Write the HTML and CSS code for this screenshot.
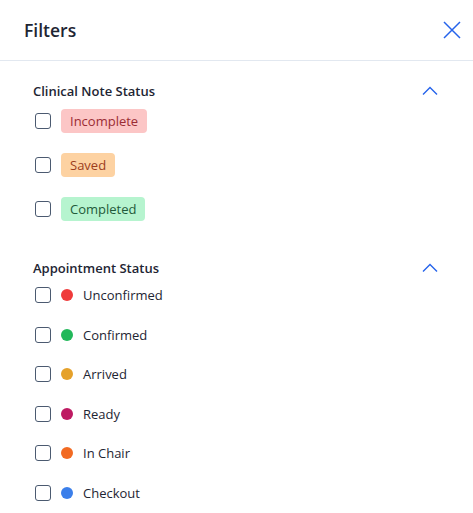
FILE: index.html
```html
<!DOCTYPE html>
<html lang="en">
  <head>
    <meta charset="UTF-8" />
    <meta name="viewport" content="width=device-width, initial-scale=1.0" />
    <title>Filters</title>
    <link rel="stylesheet" href="styles.css">
  </head>
  <body>
    <div class="panel">
      <div class="header">
        <h2 class="title">Filters</h2>
        <span class="close">
          <svg width="18" height="18" viewBox="0 0 18 18"><path d="M1 1L17 17M17 1L1 17" stroke="#2563eb" stroke-width="1.5" fill="none"/></svg>
        </span>
      </div>

      <div class="section">
        <div class="section-head">
          <span class="section-title">Clinical Note Status</span>
          <svg class="chevron" width="16" height="10" viewBox="0 0 16 10"><path d="M1 8.5L8 1.5L15 8.5" stroke="#2563eb" stroke-width="1.4" fill="none"/></svg>
        </div>
        <div class="list badges">
          <label class="row"><span class="box"></span><span class="badge incomplete">Incomplete</span></label>
          <label class="row"><span class="box"></span><span class="badge saved">Saved</span></label>
          <label class="row"><span class="box"></span><span class="badge completed">Completed</span></label>
        </div>
      </div>

      <div class="section second">
        <div class="section-head">
          <span class="section-title">Appointment Status</span>
          <svg class="chevron" width="16" height="10" viewBox="0 0 16 10"><path d="M1 8.5L8 1.5L15 8.5" stroke="#2563eb" stroke-width="1.4" fill="none"/></svg>
        </div>
        <div class="list dots">
          <label class="row"><span class="box"></span><span class="dot" style="background:#ef3b3b"></span>Unconfirmed</label>
          <label class="row"><span class="box"></span><span class="dot" style="background:#22b85a"></span>Confirmed</label>
          <label class="row"><span class="box"></span><span class="dot" style="background:#e5a12a"></span>Arrived</label>
          <label class="row"><span class="box"></span><span class="dot" style="background:#be1a62"></span>Ready</label>
          <label class="row"><span class="box"></span><span class="dot" style="background:#f26a22"></span>In Chair</label>
          <label class="row"><span class="box"></span><span class="dot" style="background:#3b7fea"></span>Checkout</label>
        </div>
      </div>
    </div>
  </body>
</html>
```

FILE: styles.css
```css
* {
  margin: 0;
  padding: 0;
  box-sizing: border-box;
}

body {
  font-family: "Open Sans", "Noto Sans", sans-serif;
  color: #1e2533;
  background: #fff;
}

.header {
  height: 61px;
  display: flex;
  align-items: center;
  justify-content: space-between;
  padding: 0 12px 0 24px;
  border-bottom: 1px solid #e2e8f0;
}

.title {
  font-size: 17.5px;
  font-weight: 600;
  line-height: 24px;
}

.close {
  display: flex;
  cursor: pointer;
}

.section {
  padding: 20px 35px 0 33px;
}

.section.second {
  padding-top: 37px;
}

.section-head {
  display: flex;
  align-items: center;
  justify-content: space-between;
  height: 20px;
}

.section-title {
  font-size: 13px;
  font-weight: 600;
  line-height: 20px;
}

.list {
  display: flex;
  flex-direction: column;
}

.badges {
  gap: 20px;
  margin-top: 8px;
}

.dots {
  gap: 19.6px;
  margin-top: 7px;
}

.row {
  display: flex;
  align-items: center;
  font-size: 13px;
  line-height: 20px;
  cursor: pointer;
}

.box {
  width: 16px;
  height: 16px;
  border: 1.5px solid #4b5a70;
  border-radius: 3px;
  margin-left: 2px;
  margin-right: 10px;
  flex-shrink: 0;
}

.badge {
  display: inline-block;
  height: 24px;
  line-height: 24px;
  padding: 0 9px;
  border-radius: 4px;
}

.incomplete {
  background: #fcc6c6;
  color: #9b2c34;
}

.saved {
  background: #fdd2a2;
  color: #9c3d1c;
}

.completed {
  background: #b6f4cf;
  color: #1f5a3a;
}

.dot {
  width: 12px;
  height: 12px;
  border-radius: 50%;
  margin-right: 10px;
}
```
